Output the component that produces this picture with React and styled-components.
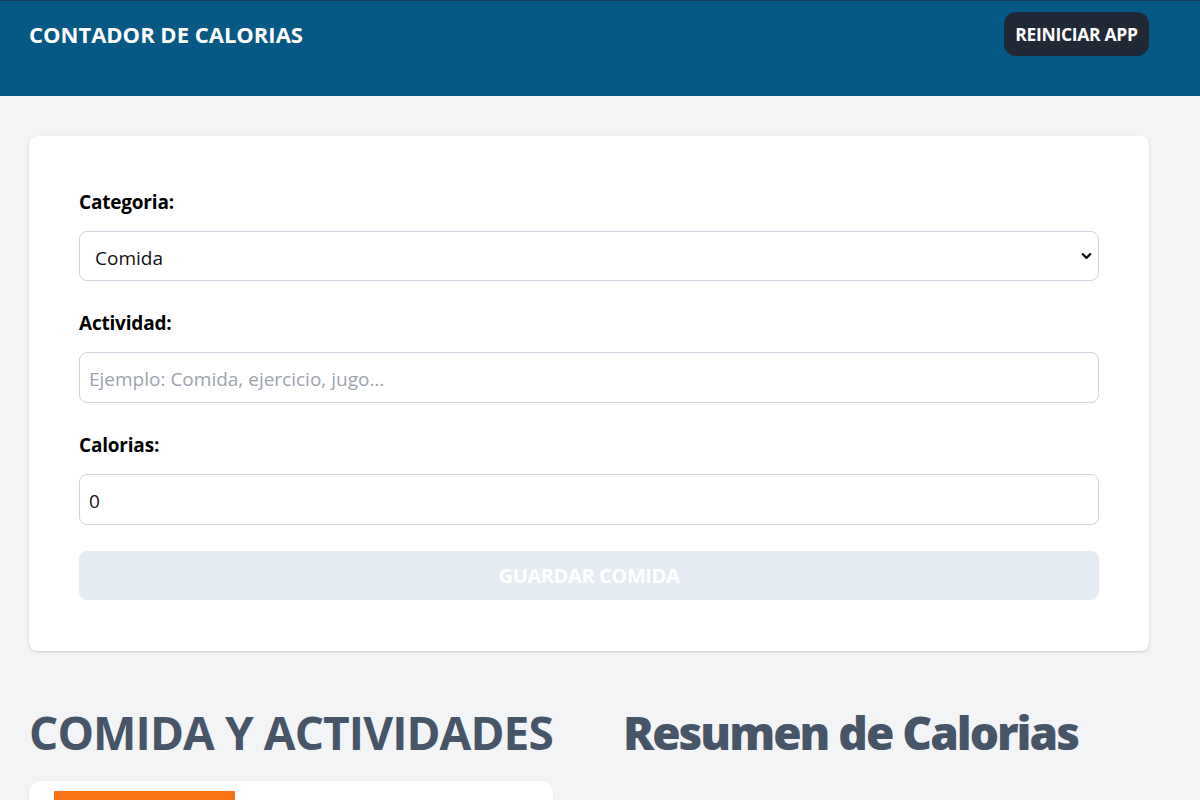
import React, { useState } from 'react'
import styled, { createGlobalStyle } from 'styled-components'
import { ChevronDown } from 'lucide-react'

const GlobalStyle = createGlobalStyle`
  html, body {
    margin: 0;
    padding: 0;
    background: #f3f4f6;
    font-family: 'Open Sans', 'Noto Sans', sans-serif;
  }
  body::-webkit-scrollbar { display: none; }
  * { box-sizing: border-box; }
`

const Header = styled.header`
  background-color: #075985;
  border-top: 1px solid #1b3a5c;
  height: 96px;
`

const HeaderRow = styled.div`
  width: 1120px;
  margin-left: 29px;
  padding-top: 11px;
  display: flex;
  justify-content: space-between;
  align-items: center;
`

const AppTitle = styled.h1`
  margin: 0;
  color: white;
  font-size: 22px;
  font-weight: 700;
  text-transform: uppercase;
  letter-spacing: 0;
`

const ResetButton = styled.button`
  background-color: #212835;
  color: white;
  border: none;
  border-radius: 12px;
  height: 44px;
  padding: 0;
  width: 145px;
  font-family: inherit;
  font-size: 17.5px;
  font-weight: 700;
  text-transform: uppercase;
  letter-spacing: -0.3px;
  cursor: pointer;
`

const Main = styled.main`
  width: 1120px;
  margin-left: 29px;
  padding-top: 40px;
`

const FormCard = styled.form`
  background: white;
  border-radius: 8px;
  box-shadow: 0 1px 3px rgba(0,0,0,0.12), 0 1px 2px rgba(0,0,0,0.06);
  padding: 52px 50px 51px;
  display: flex;
  flex-direction: column;
`

const Field = styled.div`
  display: flex;
  flex-direction: column;
  gap: 15px;
  margin-bottom: 28px;
  &:nth-of-type(3) { margin-bottom: 26px; }
`

const Label = styled.label`
  font-size: 19px;
  line-height: 28px;
  font-weight: 700;
  color: #000;
  letter-spacing: -0.2px;
`

const SelectWrap = styled.div`
  position: relative;
  svg {
    position: absolute;
    right: 5px;
    top: 50%;
    transform: translateY(-50%);
    pointer-events: none;
    color: #111;
  }
`

const Select = styled.select`
  appearance: none;
  width: 100%;
  height: 50px;
  border: 1px solid #cbd5e1;
  border-radius: 8px;
  background: white;
  padding: 3px 15px 0;
  font-family: inherit;
  font-size: 19px;
  color: #111;
`

const Input = styled.input`
  width: 100%;
  height: 51px;
  border: 1px solid #cbd5e1;
  border-radius: 8px;
  padding: 2px 9px 0;
  font-family: inherit;
  font-size: 19px;
  color: #111;
  &::placeholder { color: #9ca3af; }
`

const SubmitButton = styled.button`
  height: 49px;
  border: none;
  border-radius: 8px;
  background-color: ${p => (p.disabled ? '#e5ecf3' : '#1f2937')};
  color: white;
  font-family: inherit;
  font-size: 20px;
  font-weight: 700;
  text-transform: uppercase;
  letter-spacing: -0.4px;
`

const Columns = styled.section`
  display: grid;
  grid-template-columns: 524px 1fr;
  column-gap: 70px;
  padding-top: 57px;
`

const SectionTitle = styled.h2`
  margin: 0 0 25px;
  font-size: 46px;
  line-height: 48px;
  font-weight: ${p => p.$weight || 700};
  color: #475569;
  letter-spacing: ${p => p.$tight || '-0.9px'};
  white-space: nowrap;
`

const ActivityCard = styled.div`
  background: white;
  border-radius: 12px;
  padding: 10px 25px 20px;
  box-shadow: 0 1px 3px rgba(0,0,0,0.08);
`

const Badge = styled.p`
  display: inline-block;
  margin: 0;
  width: 181px;
  padding: 14px 10px;
  background-color: ${p => (p.$food ? '#f97316' : '#84cc16')};
  color: white;
  font-weight: 700;
  text-transform: uppercase;
  text-align: center;
`

const categories = [
  { id: 1, name: 'Comida' },
  { id: 2, name: 'Ejercicio' },
]

export default function App() {
  const [form, setForm] = useState({ category: 1, name: '', calories: 0 })

  const handleChange = (e) => {
    const isNumber = ['category', 'calories'].includes(e.target.id)
    setForm({ ...form, [e.target.id]: isNumber ? +e.target.value : e.target.value })
  }

  const isValid = form.name.trim() !== '' && form.calories > 0

  return (
    <>
      <GlobalStyle />
      <Header>
        <HeaderRow>
          <AppTitle>Contador de Calorias</AppTitle>
          <ResetButton type="button">Reiniciar App</ResetButton>
        </HeaderRow>
      </Header>
      <Main>
        <FormCard onSubmit={(e) => e.preventDefault()}>
          <Field>
            <Label htmlFor="category">Categoria:</Label>
            <SelectWrap>
              <Select id="category" value={form.category} onChange={handleChange}>
                {categories.map(c => (
                  <option key={c.id} value={c.id}>{c.name}</option>
                ))}
              </Select>
              <ChevronDown size={15} strokeWidth={3.5} />
            </SelectWrap>
          </Field>
          <Field>
            <Label htmlFor="name">Actividad:</Label>
            <Input id="name" type="text" placeholder="Ejemplo: Comida, ejercicio, jugo..." value={form.name} onChange={handleChange} />
          </Field>
          <Field>
            <Label htmlFor="calories">Calorias:</Label>
            <Input id="calories" type="number" value={form.calories} onChange={handleChange} />
          </Field>
          <SubmitButton type="submit" disabled={!isValid}>
            Guardar {form.category === 1 ? 'Comida' : 'Ejercicio'}
          </SubmitButton>
        </FormCard>

        <Columns>
          <div>
            <SectionTitle>COMIDA Y ACTIVIDADES</SectionTitle>
            <ActivityCard>
              <Badge $food>Comida</Badge>
            </ActivityCard>
          </div>
          <div>
            <SectionTitle $weight={800} $tight="-2px">Resumen de Calorias</SectionTitle>
          </div>
        </Columns>
      </Main>
    </>
  )
}
